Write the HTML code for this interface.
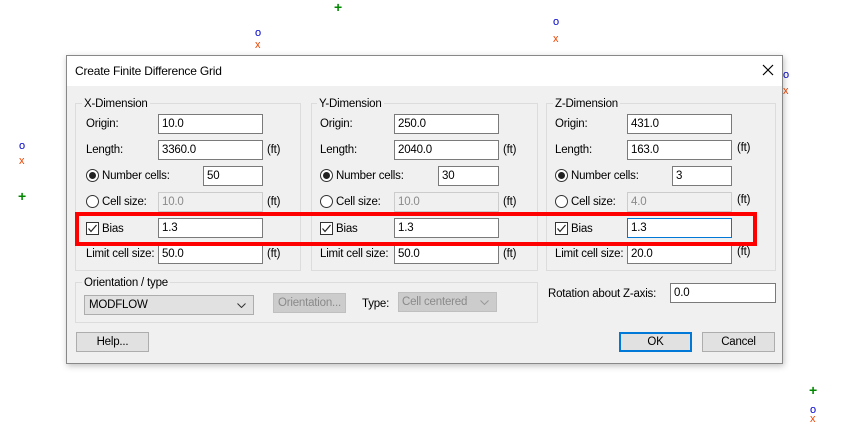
<!DOCTYPE html>
<html><head><style>
body{margin:0;width:852px;height:426px;background:#fff;position:relative;overflow:hidden;font-family:"Liberation Sans",sans-serif;font-size:11.5px;letter-spacing:-0.2px;color:#000}
div,span,svg{position:absolute;box-sizing:border-box}
.dlg{left:66px;top:55px;width:717px;height:309px;background:#f0f0f0;border:1px solid #888;box-shadow:1px 2px 6px rgba(0,0,0,.25)}
.tb{left:66px;top:55px;width:717px;height:31px;background:#fff;border:1px solid #888;border-bottom:none}
.grp{border:1px solid #dcdcdc}
.gl{background:#f0f0f0;padding:0 2px;line-height:14px}
.in{background:#fff;border:1px solid #7a7a7a;height:20px;padding:1px 3px;line-height:16px}
.dis{background:#f0f0f0;border-color:#ccc;color:#8a8a8a}
.l{line-height:14px}
.rad{width:13px;height:13px;border:1px solid #333;border-radius:50%;background:#fff}
.rad.on::after{content:"";position:absolute;left:2px;top:2px;width:7px;height:7px;border-radius:50%;background:#222}
.chk{width:13px;height:13px;border:1px solid #333;background:#fff}
.btn{background:#e1e1e1;border:1px solid #adadad;text-align:center;line-height:18px;height:20px}
.mk{font-size:11px;line-height:11px}
</style></head><body>
<span class="mk" style="left:334px;top:2px;color:#080;font-weight:bold;font-size:14px">+</span>
<span class="mk" style="left:255px;top:28px;color:#00c">o</span><span class="mk" style="left:255px;top:40px;color:#e40">x</span>
<span class="mk" style="left:553px;top:17px;color:#00c">o</span><span class="mk" style="left:553px;top:34px;color:#e40">x</span>
<span class="mk" style="left:19px;top:141px;color:#00c">o</span><span class="mk" style="left:19px;top:156px;color:#e40">x</span>
<span class="mk" style="left:18px;top:191px;color:#080;font-weight:bold;font-size:14px">+</span>
<span class="mk" style="left:809px;top:385px;color:#080;font-weight:bold;font-size:14px">+</span>
<span class="mk" style="left:810px;top:405px;color:#00c">o</span><span class="mk" style="left:810px;top:414px;color:#e40">x</span>
<span class="mk" style="left:783px;top:70px;color:#00c">o</span><span class="mk" style="left:783px;top:86px;color:#e40">x</span>

<div class="dlg"></div>
<div class="tb"></div>
<span class="l" style="left:75px;top:64px;font-size:12px">Create Finite Difference Grid</span>
<svg style="left:762px;top:64px" width="12" height="12"><path d="M1 1L11 11M11 1L1 11" stroke="#000" stroke-width="1.2"/></svg>

<!-- X -->
<div class="grp" style="left:75px;top:103px;width:226px;height:168px"></div>
<span class="gl" style="left:82px;top:97px">X-Dimension</span>
<span class="l" style="left:86px;top:117px">Origin:</span><div class="in" style="left:158px;top:114px;width:105px">10.0</div>
<span class="l" style="left:86px;top:143px">Length:</span><div class="in" style="left:158px;top:140px;width:105px">3360.0</div><span class="l" style="left:267px;top:143px">(ft)</span>
<div class="rad on" style="left:86px;top:169px"></div><span class="l" style="left:102px;top:169px">Number cells:</span><div class="in" style="left:203px;top:166px;width:60px">50</div>
<div class="rad" style="left:86px;top:195px"></div><span class="l" style="left:102px;top:195px">Cell size:</span><div class="in dis" style="left:158px;top:192px;width:105px">10.0</div><span class="l" style="left:267px;top:195px">(ft)</span>
<div class="chk" style="left:86px;top:222px"></div><svg style="left:86px;top:222px" width="13" height="13"><path d="M2.5 6.5L5 9.5L10.5 3" stroke="#222" fill="none" stroke-width="1.2"/></svg><span class="l" style="left:102px;top:222px">Bias</span><div class="in" style="left:158px;top:218px;width:105px">1.3</div>
<span class="l" style="left:86px;top:247px">Limit cell size:</span><div class="in" style="left:158px;top:244px;width:105px">50.0</div><span class="l" style="left:267px;top:247px">(ft)</span>

<!-- Y -->
<div class="grp" style="left:311px;top:103px;width:227px;height:168px"></div>
<span class="gl" style="left:317px;top:97px">Y-Dimension</span>
<span class="l" style="left:320px;top:117px">Origin:</span><div class="in" style="left:394px;top:114px;width:105px">250.0</div>
<span class="l" style="left:320px;top:143px">Length:</span><div class="in" style="left:394px;top:140px;width:105px">2040.0</div><span class="l" style="left:503px;top:143px">(ft)</span>
<div class="rad on" style="left:320px;top:169px"></div><span class="l" style="left:336px;top:169px">Number cells:</span><div class="in" style="left:438px;top:166px;width:61px">30</div>
<div class="rad" style="left:320px;top:195px"></div><span class="l" style="left:336px;top:195px">Cell size:</span><div class="in dis" style="left:394px;top:192px;width:105px">10.0</div><span class="l" style="left:503px;top:195px">(ft)</span>
<div class="chk" style="left:320px;top:222px"></div><svg style="left:320px;top:222px" width="13" height="13"><path d="M2.5 6.5L5 9.5L10.5 3" stroke="#222" fill="none" stroke-width="1.2"/></svg><span class="l" style="left:336px;top:222px">Bias</span><div class="in" style="left:394px;top:218px;width:105px">1.3</div>
<span class="l" style="left:320px;top:247px">Limit cell size:</span><div class="in" style="left:394px;top:244px;width:105px">50.0</div><span class="l" style="left:503px;top:247px">(ft)</span>

<!-- Z -->
<div class="grp" style="left:546px;top:103px;width:230px;height:168px"></div>
<span class="gl" style="left:553px;top:97px">Z-Dimension</span>
<span class="l" style="left:555px;top:117px">Origin:</span><div class="in" style="left:627px;top:114px;width:105px">431.0</div>
<span class="l" style="left:555px;top:143px">Length:</span><div class="in" style="left:627px;top:140px;width:105px">163.0</div><span class="l" style="left:737px;top:141px">(ft)</span>
<div class="rad on" style="left:555px;top:169px"></div><span class="l" style="left:571px;top:169px">Number cells:</span><div class="in" style="left:672px;top:166px;width:60px">3</div>
<div class="rad" style="left:555px;top:195px"></div><span class="l" style="left:571px;top:195px">Cell size:</span><div class="in dis" style="left:627px;top:192px;width:105px">4.0</div><span class="l" style="left:737px;top:193px">(ft)</span>
<div class="chk" style="left:555px;top:222px"></div><svg style="left:555px;top:222px" width="13" height="13"><path d="M2.5 6.5L5 9.5L10.5 3" stroke="#222" fill="none" stroke-width="1.2"/></svg><span class="l" style="left:571px;top:222px">Bias</span><div class="in" style="left:627px;top:218px;width:105px;border-color:#0078d7">1.3</div>
<span class="l" style="left:555px;top:247px">Limit cell size:</span><div class="in" style="left:627px;top:244px;width:105px">20.0</div><span class="l" style="left:737px;top:245px">(ft)</span>

<div style="left:75px;top:212px;width:682px;height:34px;border:4px solid #f00"></div>

<!-- orientation -->
<div class="grp" style="left:75px;top:282px;width:463px;height:41px"></div>
<span class="gl" style="left:82px;top:276px">Orientation / type</span>
<div class="btn" style="left:84px;top:295px;width:170px;text-align:left;padding-left:4px">MODFLOW<svg style="right:7px;top:7px" width="9" height="5"><path d="M0.5 0.5L4.5 4.5L8.5 0.5" stroke="#333" fill="none"/></svg></div>
<div class="btn" style="left:273px;top:293px;width:73px;color:#8a8a8a;background:#ccc;border-color:#bfbfbf">Orientation...</div>
<span class="l" style="left:362px;top:297px">Type:</span>
<div class="btn" style="left:398px;top:292px;width:99px;text-align:left;padding-left:3px;color:#8a8a8a;background:#ccc;border-color:#bfbfbf">Cell centered<svg style="right:7px;top:7px" width="9" height="5"><path d="M0.5 0.5L4.5 4.5L8.5 0.5" stroke="#999" fill="none"/></svg></div>
<span class="l" style="left:548px;top:287px">Rotation about Z-axis:</span><div class="in" style="left:670px;top:283px;width:106px">0.0</div>

<div class="btn" style="left:76px;top:332px;width:73px">Help...</div>
<div class="btn" style="left:619px;top:332px;width:73px;border:2px solid #0078d7;line-height:16px">OK</div>
<div class="btn" style="left:702px;top:332px;width:73px">Cancel</div>
</body></html>
